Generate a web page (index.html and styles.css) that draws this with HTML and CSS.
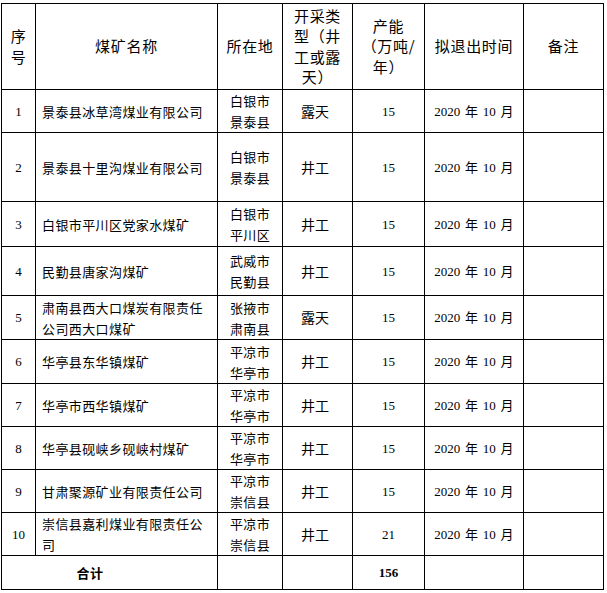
FILE: index.html
```html
<!DOCTYPE html>
<html lang="zh-CN">
<head>
<meta charset="utf-8">
<title>煤矿退出名单</title>
<link rel="stylesheet" href="styles.css">
</head>
<body>
<table class="mines">
  <colgroup>
    <col class="c-seq">
    <col class="c-name">
    <col class="c-loc">
    <col class="c-type">
    <col class="c-cap">
    <col class="c-date">
    <col class="c-note">
  </colgroup>
  <thead>
    <tr class="r-head">
      <th>序<br>号</th>
      <th>煤矿名称</th>
      <th>所在地</th>
      <th class="h-type">开采类<br>型（井<br>工或露<br>天）</th>
      <th>产能<br>（万吨/<br>年）</th>
      <th>拟退出时间</th>
      <th>备注</th>
    </tr>
  </thead>
  <tbody>
    <tr class="r-43">
      <td class="num">1</td><td class="name">景泰县冰草湾煤业有限公司</td><td class="loc">白银市<br>景泰县</td><td class="type">露天</td><td class="num">15</td><td class="date">2020 年 10 月</td><td></td>
    </tr>
    <tr class="r-69">
      <td class="num">2</td><td class="name">景泰县十里沟煤业有限公司</td><td class="loc">白银市<br>景泰县</td><td class="type">井工</td><td class="num">15</td><td class="date">2020 年 10 月</td><td></td>
    </tr>
    <tr class="r-45">
      <td class="num">3</td><td class="name">白银市平川区党家水煤矿</td><td class="loc">白银市<br>平川区</td><td class="type">井工</td><td class="num">15</td><td class="date">2020 年 10 月</td><td></td>
    </tr>
    <tr class="r-49">
      <td class="num">4</td><td class="name">民勤县唐家沟煤矿</td><td class="loc">武威市<br>民勤县</td><td class="type">井工</td><td class="num">15</td><td class="date">2020 年 10 月</td><td></td>
    </tr>
    <tr class="r-44">
      <td class="num">5</td><td class="name">肃南县西大口煤炭有限责任公司西大口煤矿</td><td class="loc">张掖市<br>肃南县</td><td class="type">露天</td><td class="num">15</td><td class="date">2020 年 10 月</td><td></td>
    </tr>
    <tr class="r-44">
      <td class="num">6</td><td class="name">华亭县东华镇煤矿</td><td class="loc">平凉市<br>华亭市</td><td class="type">井工</td><td class="num">15</td><td class="date">2020 年 10 月</td><td></td>
    </tr>
    <tr class="r-43">
      <td class="num">7</td><td class="name">华亭市西华镇煤矿</td><td class="loc">平凉市<br>华亭市</td><td class="type">井工</td><td class="num">15</td><td class="date">2020 年 10 月</td><td></td>
    </tr>
    <tr class="r-43">
      <td class="num">8</td><td class="name">华亭县砚峡乡砚峡村煤矿</td><td class="loc">平凉市<br>华亭市</td><td class="type">井工</td><td class="num">15</td><td class="date">2020 年 10 月</td><td></td>
    </tr>
    <tr class="r-43">
      <td class="num">9</td><td class="name">甘肃聚源矿业有限责任公司</td><td class="loc">平凉市<br>崇信县</td><td class="type">井工</td><td class="num">15</td><td class="date">2020 年 10 月</td><td></td>
    </tr>
    <tr class="r-43">
      <td class="num">10</td><td class="name">崇信县嘉利煤业有限责任公司</td><td class="loc">平凉市<br>崇信县</td><td class="type">井工</td><td class="num">21</td><td class="date">2020 年 10 月</td><td></td>
    </tr>
    <tr class="r-total">
      <td class="total" colspan="2">合计</td><td></td><td></td><td class="num bold">156</td><td></td><td></td>
    </tr>
  </tbody>
</table>
</body>
</html>
```

FILE: styles.css
```css
html, body {
  margin: 0;
  padding: 0;
  background: #ffffff;
}

body {
  padding: 3px 0 0 1px;
  font-family: "Noto Sans CJK SC", "Noto Sans", sans-serif;
  color: #000000;
}

.mines {
  border-collapse: collapse;
  table-layout: fixed;
  width: 603px;
}

.c-seq { width: 34px; }
.c-name { width: 182px; }
.c-loc { width: 65px; }
.c-type { width: 70px; }
.c-cap { width: 72px; }
.c-date { width: 99px; }
.c-note { width: 80px; }

.mines th,
.mines td {
  box-sizing: border-box;
  border: 1px solid #000000;
  padding: 0 3px;
  vertical-align: middle;
  text-align: center;
  overflow: hidden;
}

.mines th {
  font-size: 15px;
  font-weight: normal;
  line-height: 20.5px;
  letter-spacing: 0.7px;
}

.r-head th { height: 86px; }
.r-43 td { height: 43px; }
.r-44 td { height: 44px; }
.r-45 td { height: 45px; }
.r-49 td { height: 49px; }
.r-69 td { height: 69px; }
.r-total td { height: 34px; }

.mines td {
  font-size: 13px;
  line-height: 21px;
}

.mines .num {
  font-family: "Liberation Serif", "DejaVu Serif", serif;
  font-size: 13px;
}

.mines .name {
  text-align: left;
  padding-left: 6px;
  padding-right: 8px;
  letter-spacing: 0.4px;
  line-height: 21px;
}

.mines .loc {
  font-size: 13px;
  letter-spacing: 0.3px;
}

.mines .type {
  font-size: 14px;
  padding-right: 8px;
}

.mines .date {
  font-family: "Liberation Serif", "Noto Sans CJK SC", serif;
  font-size: 13px;
  word-spacing: 1.5px;
}

.mines .bold {
  font-weight: bold;
}

.mines .total {
  font-weight: bold;
  font-size: 13px;
  padding-right: 42px;
  letter-spacing: 0.5px;
}
```
